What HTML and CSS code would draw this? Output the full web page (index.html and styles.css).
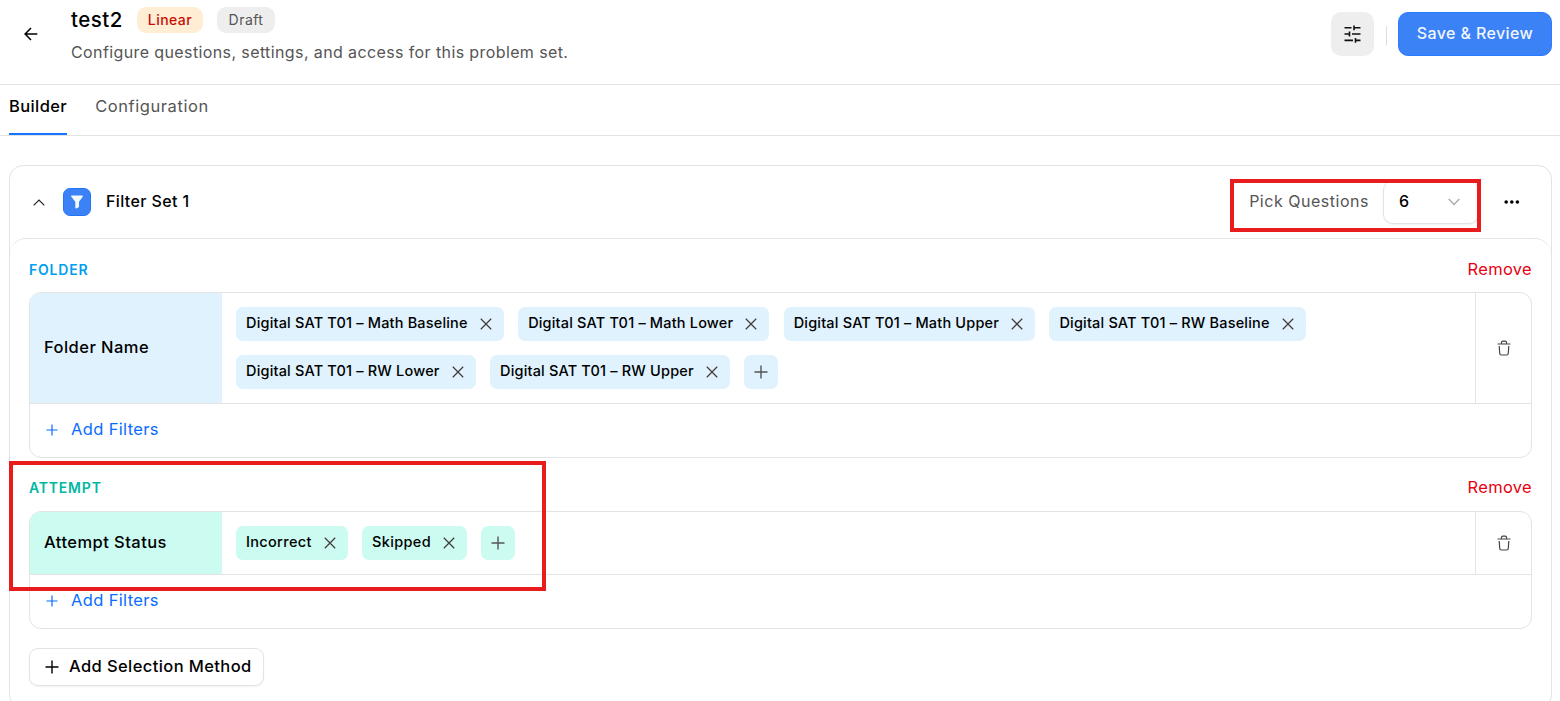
FILE: index.html
```
<!DOCTYPE html>
<html lang="en">
<head>
    <meta charset="UTF-8">
    <meta name="viewport" content="width=device-width, initial-scale=1.0">
    <title>test2 - Problem Set</title>
    <link rel="stylesheet" href="styles.css">
</head>
<body>
    <!-- Shared icons -->
    <svg class="icon-defs" width="0" height="0">
        <symbol id="icon-close" viewBox="0 0 12 12">
            <path d="M0.8 0.8L11.2 11.2M11.2 0.8L0.8 11.2" fill="none" stroke="currentColor" stroke-width="1.25"/>
        </symbol>
        <symbol id="icon-plus" viewBox="0 0 14 14">
            <path d="M7 .5V13.5M.5 7H13.5" fill="none" stroke="currentColor" stroke-width="1.4"/>
        </symbol>
        <symbol id="icon-trash" viewBox="0 0 14 16">
            <path d="M.5 4H13.5M4.5 3.7V2.5Q4.5 1.2 5.8 1.2H8.2Q9.5 1.2 9.5 2.5V3.7M2.2 6L2.7 13.2Q2.8 15 4.5 15H9.5Q11.2 15 11.3 13.2L11.8 6" fill="none" stroke="currentColor" stroke-width="1.2"/>
        </symbol>
    </svg>

    <!-- Header -->
    <header class="header">
        <a class="back" href="#" aria-label="Back">
            <svg width="14" height="14" viewBox="0 0 14 14"><path d="M13.3 7H1.2M7 1L1.1 7L7 13" fill="none" stroke="#000" stroke-width="1.5"/></svg>
        </a>
        <div class="heading">
            <div class="title-row">
                <h1>test2</h1>
                <span class="badge linear">Linear</span>
                <span class="badge draft">Draft</span>
            </div>
            <p>Configure questions, settings, and access for this problem set.</p>
        </div>
        <button class="settings" aria-label="Settings">
            <svg width="17" height="18" viewBox="0 0 17 18"><path d="M.5 2.8H7.5M10 2.8H16.5M10 .4V5.2M.5 9H5.5M5.5 6.6V11.4M8 9H16.5M.5 15.4H9M11.5 13V17.8M11.5 15.4H16.5" fill="none" stroke="#111" stroke-width="1.6"/></svg>
        </button>
        <span class="separator"></span>
        <button class="save">Save &amp; Review</button>
    </header>

    <!-- Tabs -->
    <nav class="tabs">
        <a class="tab active" href="#">Builder</a>
        <a class="tab" href="#">Configuration</a>
    </nav>

    <!-- Filter Set -->
    <main class="card">
        <div class="card-header">
            <svg class="chevron" width="12" height="7" viewBox="0 0 12 7"><path d="M.7 6.3L6 1L11.3 6.3" fill="none" stroke="#222" stroke-width="1.2"/></svg>
            <span class="filter-icon">
                <svg width="12" height="14" viewBox="0 0 12 14"><path d="M.6 .5H11.4Q12.3 .7 11.7 1.8L8 6.8V12L5.6 13.6Q4.3 13.7 4.3 12.5V6.8L.3 1.8Q-.2 .8 .6 .5Z" fill="#f4f8ff"/></svg>
            </span>
            <h2>Filter Set 1</h2>
            <span class="pick-label">Pick Questions</span>
            <div class="select">
                <span>6</span>
                <svg width="12" height="8" viewBox="0 0 12 8"><path d="M.7 1L6 6.5L11.3 1" fill="none" stroke="#aaa" stroke-width="1.3"/></svg>
            </div>
            <svg class="more" width="16" height="4" viewBox="0 0 16 4"><g fill="#000"><circle cx="2.2" cy="2" r="1.8"/><circle cx="7.8" cy="2" r="1.8"/><circle cx="13.4" cy="2" r="1.8"/></g></svg>
            <div class="highlight highlight-pick"></div>
        </div>

        <div class="card-body">
            <section class="group folder">
                <div class="group-title">
                    <h3>FOLDER</h3>
                    <a class="remove" href="#">Remove</a>
                </div>
                <div class="table">
                    <div class="row">
                        <div class="name">Folder Name</div>
                        <div class="chips">
                            <span class="chip"><span>Digital SAT T01 – Math Baseline</span><svg><use href="#icon-close"/></svg></span>
                            <span class="chip"><span>Digital SAT T01 – Math Lower</span><svg><use href="#icon-close"/></svg></span>
                            <span class="chip"><span>Digital SAT T01 – Math Upper</span><svg><use href="#icon-close"/></svg></span>
                            <span class="chip"><span>Digital SAT T01 – RW Baseline</span><svg><use href="#icon-close"/></svg></span>
                            <span class="chip"><span>Digital SAT T01 – RW Lower</span><svg><use href="#icon-close"/></svg></span>
                            <span class="chip"><span>Digital SAT T01 – RW Upper</span><svg><use href="#icon-close"/></svg></span>
                            <span class="chip-add"><svg><use href="#icon-plus"/></svg></span>
                        </div>
                        <div class="delete"><svg><use href="#icon-trash"/></svg></div>
                    </div>
                    <a class="add-filters" href="#"><svg><use href="#icon-plus"/></svg><span>Add Filters</span></a>
                </div>
            </section>

            <section class="group attempt">
                <div class="group-title">
                    <h3>ATTEMPT</h3>
                    <a class="remove" href="#">Remove</a>
                </div>
                <div class="table">
                    <div class="row">
                        <div class="name">Attempt Status</div>
                        <div class="chips">
                            <span class="chip"><span>Incorrect</span><svg><use href="#icon-close"/></svg></span>
                            <span class="chip"><span>Skipped</span><svg><use href="#icon-close"/></svg></span>
                            <span class="chip-add"><svg><use href="#icon-plus"/></svg></span>
                        </div>
                        <div class="delete"><svg><use href="#icon-trash"/></svg></div>
                    </div>
                    <a class="add-filters" href="#"><svg><use href="#icon-plus"/></svg><span>Add Filters</span></a>
                </div>
                <div class="highlight highlight-attempt"></div>
            </section>

            <button class="add-method"><svg><use href="#icon-plus"/></svg><span>Add Selection Method</span></button>
        </div>
    </main>
</body>
</html>
```
FILE: styles.css
```
/* General Styles */
* {
    box-sizing: border-box;
}

body {
    margin: 0;
    height: 701px;
    overflow: hidden;
    background-color: #fff;
    color: #000;
    font-family: Inter, Roboto, sans-serif;
    font-size: 16px;
    line-height: 20px;
    letter-spacing: 0.45px;
}

h1, h2, h3, p {
    margin: 0;
}

a {
    text-decoration: none;
}

button {
    font-family: inherit;
    letter-spacing: inherit;
    cursor: pointer;
}

svg {
    display: block;
    flex: none;
}

.icon-defs {
    position: absolute;
}

/* Header Styles */
.header {
    display: flex;
    align-items: center;
    height: 85px;
    padding: 0 8px 17px 24px;
    border-bottom: 1px solid #e3e3e3;
}

.heading {
    flex: 1;
    margin-left: 33px;
}

.title-row {
    display: flex;
    align-items: center;
    height: 26px;
    margin-top: 1px;
}

.title-row h1 {
    width: 66px;
    font-size: 20.5px;
    font-weight: 500;
}

.badge {
    height: 26px;
    border-radius: 9px;
    font-size: 14px;
    line-height: 25px;
    text-align: center;
}

.badge.linear {
    width: 66px;
    background-color: #ffedd4;
    color: #c61005;
    font-weight: 500;
}

.badge.draft {
    width: 58px;
    margin-left: 14px;
    background-color: #eee;
    color: #555;
}

.heading p {
    margin-top: 9px;
    color: #555;
    letter-spacing: 0.39px;
}

.settings {
    display: flex;
    align-items: center;
    justify-content: center;
    width: 43px;
    height: 44px;
    padding: 0;
    border: none;
    border-radius: 10px;
    background-color: #eee;
}

.separator {
    width: 1px;
    height: 19px;
    margin: 3px 11px 0 12px;
    background-color: #ddd;
}

.save {
    width: 154px;
    height: 44px;
    padding: 0 0 2px;
    border: 1px solid #2b7aff;
    border-radius: 10px;
    background-color: #3b82f6;
    color: #f1f6ff;
    font-size: 16px;
    font-weight: 500;
    letter-spacing: 0.4px;
}

/* Tabs */
.tabs {
    display: flex;
    gap: 28px;
    height: 51px;
    padding-left: 9px;
    border-bottom: 1px solid #e3e3e3;
}

.tab {
    padding-top: 11px;
    color: #555;
    font-size: 16.5px;
    letter-spacing: 0.57px;
}

.tab.active {
    border-bottom: 2px solid #1475ff;
    color: #000;
    font-weight: 500;
    letter-spacing: 0.4px;
}

/* Filter Set Card */
.card {
    height: 544px;
    margin: 29px 8px 0 9px;
    border: 1px solid #e3e3e3;
    border-radius: 14px;
}

.card-header {
    position: relative;
    display: flex;
    align-items: center;
    height: 72px;
    padding: 0 31px 0 23px;
}

.filter-icon {
    display: flex;
    align-items: center;
    justify-content: center;
    width: 28px;
    height: 28px;
    margin: 0 15px 0 18px;
    border: 1px solid #2475f5;
    border-radius: 7px;
    background-color: #3b82f6;
}

.card-header h2 {
    flex: 1;
    padding-bottom: 2px;
    font-size: 16px;
    font-weight: 500;
    letter-spacing: 0.38px;
}

.pick-label {
    padding-bottom: 2px;
    color: #555;
    letter-spacing: 0.52px;
}

.select {
    display: flex;
    align-items: center;
    justify-content: space-between;
    width: 96px;
    height: 44px;
    margin: 0 25px 0 14px;
    padding: 0 18px 0 15px;
    border: 1px solid #e3e3e3;
    border-radius: 10px;
    box-shadow: 0 1px 2px rgba(0, 0, 0, 0.06);
    font-weight: 500;
}

.select span {
    margin-bottom: 2px;
}

.card-body {
    padding: 21px 19px 0;
    border-top: 1px solid #e3e3e3;
    border-radius: 16px 16px 0 0;
}

/* Filter Groups */
.group {
    position: relative;
}

.group-title {
    display: flex;
    justify-content: space-between;
    height: 32px;
}

.group-title h3 {
    font-size: 14px;
    font-weight: 600;
    letter-spacing: 0.8px;
}

.folder h3 {
    color: #00a0f0;
}

.attempt h3 {
    color: #00b89f;
}

.remove {
    margin-top: -1px;
    color: #e7000f;
    font-size: 16.5px;
    letter-spacing: 0.3px;
}

.table {
    border: 1px solid #e3e3e3;
    border-radius: 12px;
    overflow: hidden;
}

.row {
    display: flex;
    border-bottom: 1px solid #e3e3e3;
}

.name {
    display: flex;
    align-items: center;
    width: 192px;
    padding: 0 0 2px 14px;
    font-size: 16.5px;
    font-weight: 500;
}

.chips {
    display: flex;
    flex: 1;
    flex-wrap: wrap;
    gap: 14px 14.4px;
    padding: 14px;
}

.chip {
    display: flex;
    align-items: center;
    height: 34px;
    padding: 0 12px 0 10px;
    border-radius: 7px;
    font-size: 14.5px;
    font-weight: 500;
    letter-spacing: 0.18px;
}

.attempt .chip {
    letter-spacing: 0.33px;
}

.chip span {
    margin-bottom: 2px;
}

.chip svg {
    width: 12px;
    height: 12px;
    margin-left: 12px;
    color: #443c38;
}

.chip-add {
    display: flex;
    align-items: center;
    justify-content: center;
    width: 34px;
    height: 34px;
    border-radius: 7px;
}

.chip-add svg {
    width: 14px;
    height: 14px;
    color: #555;
}

.folder .name,
.folder .chip,
.folder .chip-add {
    background-color: #dff2fe;
}

.attempt .name,
.attempt .chip,
.attempt .chip-add {
    background-color: #cbfbf1;
}

.delete {
    display: flex;
    align-items: center;
    justify-content: center;
    width: 56px;
    border-left: 1px solid #e3e3e3;
    color: #444;
}

.delete svg {
    width: 14px;
    height: 16px;
}

.add-filters {
    display: flex;
    align-items: center;
    gap: 13px;
    height: 53px;
    padding: 0 0 1px 16px;
    color: #0a6cff;
    font-size: 16.5px;
    letter-spacing: 0.35px;
}

.add-filters span {
    margin-bottom: 2px;
}

.add-filters svg {
    width: 12px;
    height: 12px;
}

.attempt {
    margin-top: 20px;
}

.attempt .group-title {
    height: 33px;
}

.add-method {
    display: flex;
    align-items: center;
    gap: 10px;
    width: 235px;
    height: 38px;
    margin-top: 19px;
    padding: 0 0 0 15px;
    border: 1px solid #e3e3e3;
    border-radius: 9px;
    background-color: #fff;
    box-shadow: 0 1px 2px rgba(0, 0, 0, 0.06);
    color: #000;
    font-size: 16.5px;
    font-weight: 500;
    letter-spacing: 0.4px;
}

.add-method span {
    margin-bottom: 2px;
}

.add-method svg {
    width: 14px;
    height: 14px;
}

/* Red callout frames */
.highlight {
    position: absolute;
    border: 4px solid #e81c1c;
    pointer-events: none;
}

.highlight-pick {
    top: 13px;
    right: 70px;
    width: 251px;
    height: 53px;
}

.highlight-attempt {
    top: -17px;
    left: -20px;
    width: 537px;
    height: 130px;
}
```
